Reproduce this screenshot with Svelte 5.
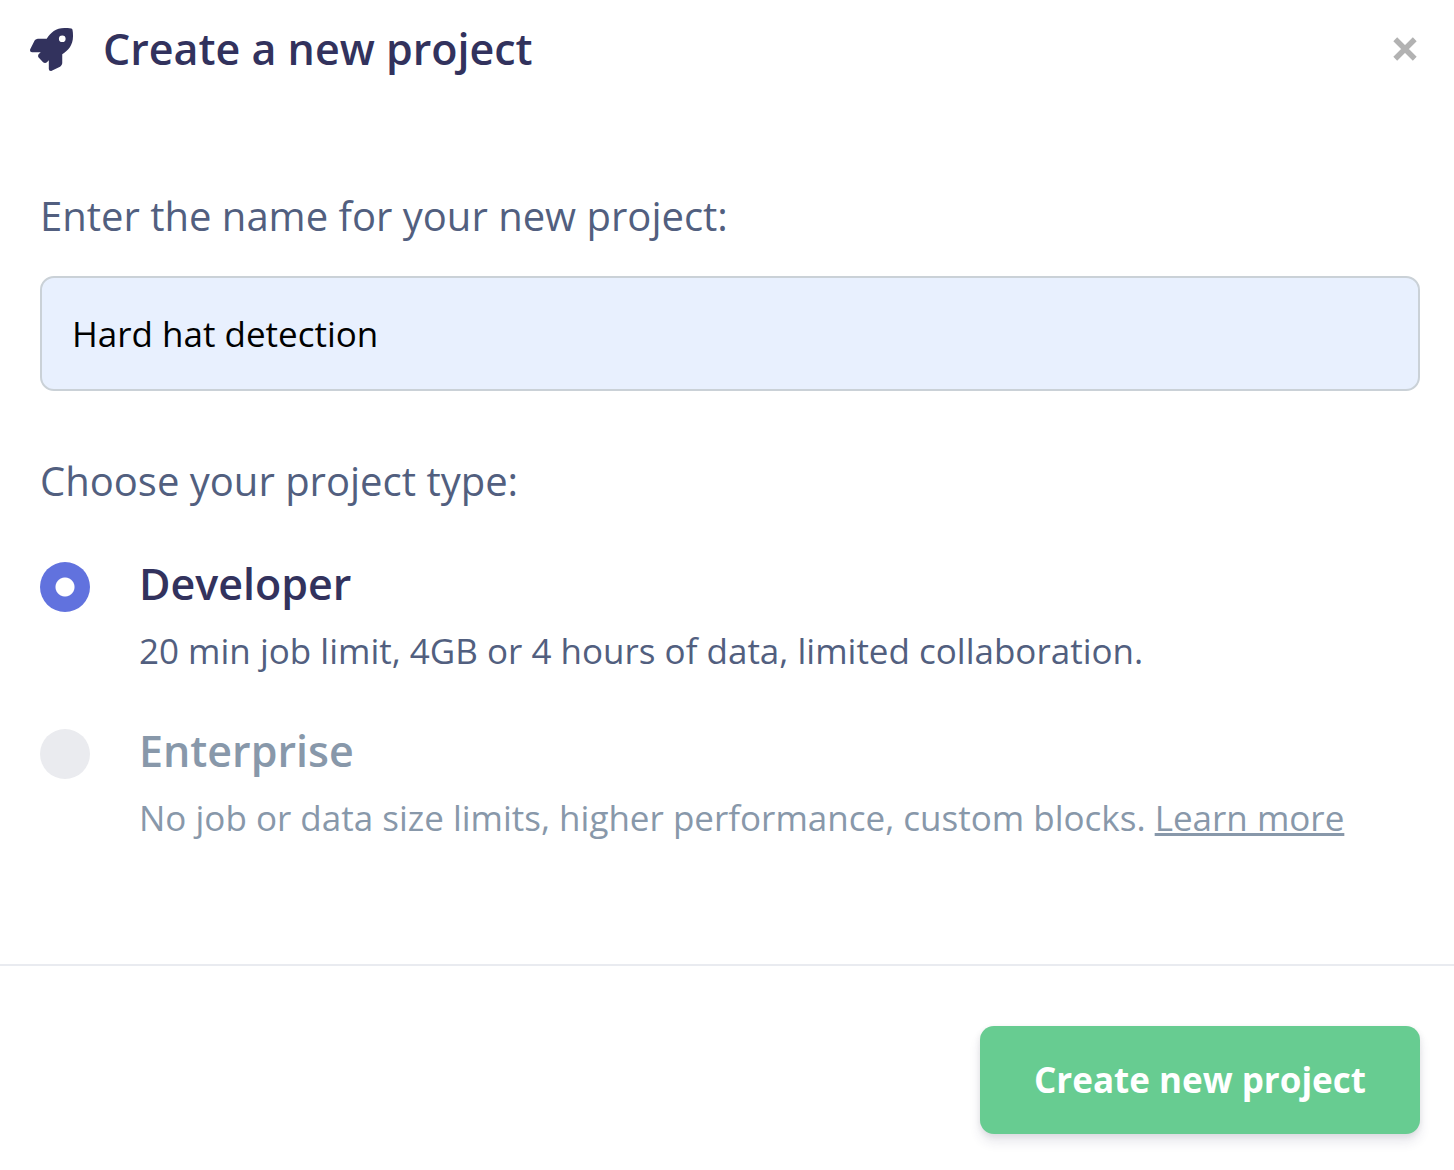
<script>
  let name = "Hard hat detection";
  let type = "developer";
</script>

<form class="modal" on:submit|preventDefault>
  <header class="modal-header">
    <svg class="rocket" viewBox="0 0 512 512" aria-hidden="true">
      <path
        fill="currentColor"
        d="M505.12 19.094c-1.19-5.531-6.658-11-12.207-12.188C460.716 0 435.507 0 410.407 0 307.175 0 245.269 55.203 199.052 128H94.838c-16.348.016-35.557 11.875-42.887 26.484L2.516 253.297A28.4 28.4 0 0 0 0 264a24.009 24.009 0 0 0 24.006 24h103.81l-22.474 22.469c-11.366 11.361-12.996 32.258 0 45.25l50.904 50.906c11.156 11.188 32.156 13.156 45.277 0l22.475-22.469V488a24.009 24.009 0 0 0 24.006 24 28.559 28.559 0 0 0 10.707-2.516l98.728-49.39c14.629-7.297 26.508-26.5 26.508-42.86V312.797c72.597-46.313 128.035-108.406 128.035-211.094.093-25.203.093-50.406-6.862-82.609ZM384.04 168A40 40 0 1 1 424.05 128 40.023 40.023 0 0 1 384.04 168Z"
      />
    </svg>
    <h1>Create a new project</h1>
    <button class="close" type="button" aria-label="Close">
      <svg viewBox="0 0 24 24" aria-hidden="true">
        <path d="M3 3L21 21M21 3L3 21" stroke="currentColor" stroke-width="5" />
      </svg>
    </button>
  </header>

  <div class="modal-body">
    <label class="label" for="project-name">Enter the name for your new project:</label>
    <input id="project-name" class="name" type="text" autocomplete="off" spellcheck="false" bind:value={name} />

    <fieldset>
      <legend class="label">Choose your project type:</legend>
      <div class="option">
        <input id="developer" type="radio" value="developer" bind:group={type} />
        <div class="text">
          <label for="developer">Developer</label>
          <p>20 min job limit, 4GB or 4 hours of data, limited collaboration.</p>
        </div>
      </div>
      <div class="option disabled">
        <input id="enterprise" type="radio" value="enterprise" disabled bind:group={type} />
        <div class="text">
          <label for="enterprise">Enterprise</label>
          <p>
            No job or data size limits, higher performance, custom blocks.
            <a href="#learn-more">Learn more</a>
          </p>
        </div>
      </div>
    </fieldset>
  </div>

  <footer class="modal-footer">
    <button class="create" type="submit">Create new project</button>
  </footer>
</form>

<style>
  :global(body) {
    background: #fff;
  }

  .modal {
    font-family: "Open Sans", sans-serif;
    color: #525f7f;
  }

  .modal-header {
    display: flex;
    align-items: center;
    padding: 19px 36px 19px 30px;
    color: #32325d;
  }

  .rocket {
    width: 43px;
    height: 43px;
    margin-right: 30px;
  }

  h1 {
    flex: 1;
    margin: 0;
    font-size: 43px;
    font-weight: 600;
    line-height: 60px;
  }

  .close {
    display: flex;
    padding: 0;
    border: 0;
    background: none;
    color: #b2b2b2;
    cursor: pointer;
  }

  .close svg {
    width: 26px;
    height: 26px;
  }

  .modal-body {
    padding: 88px 34px 119px 40px;
  }

  .label {
    display: block;
    padding: 0;
    font-size: 40px;
    line-height: 60px;
  }

  .name {
    display: block;
    box-sizing: border-box;
    width: 100%;
    height: 115px;
    margin-top: 30px;
    padding: 0 30px;
    border: 2px solid #cad1d7;
    border-radius: 14px;
    background: #e8f0fe;
    color: #000;
    font-family: inherit;
    font-size: 35px;
  }

  fieldset {
    margin: 60px 0 0;
    padding: 0;
    border: 0;
  }

  .option {
    display: flex;
    gap: 49px;
    padding-top: 43px;
  }

  .option input {
    flex: none;
    appearance: none;
    width: 50px;
    height: 50px;
    margin: 8px 0 0;
    border-radius: 50%;
    background: #eaebef;
  }

  .option input:checked {
    background: radial-gradient(circle, #fff 9px, #6172de 10px);
  }

  .text label {
    display: block;
    font-size: 43px;
    font-weight: 600;
    line-height: 60px;
    color: #32325d;
  }

  .text p {
    margin: 10px 0 0;
    font-size: 35px;
    line-height: 54px;
  }

  .disabled .text,
  .disabled label,
  .disabled a {
    color: #8898aa;
  }

  .modal-footer {
    display: flex;
    justify-content: flex-end;
    padding: 60px 34px 36px;
    border-top: 2px solid #e9ebf0;
  }

  .create {
    padding: 27px 54px;
    border: 0;
    border-radius: 14px;
    background: #67cc91;
    color: #fff;
    font-family: inherit;
    font-size: 35px;
    font-weight: 700;
    line-height: 54px;
    box-shadow: 0 8px 12px rgba(50, 50, 93, 0.11), 0 2px 6px rgba(0, 0, 0, 0.08);
    cursor: pointer;
  }
</style>
